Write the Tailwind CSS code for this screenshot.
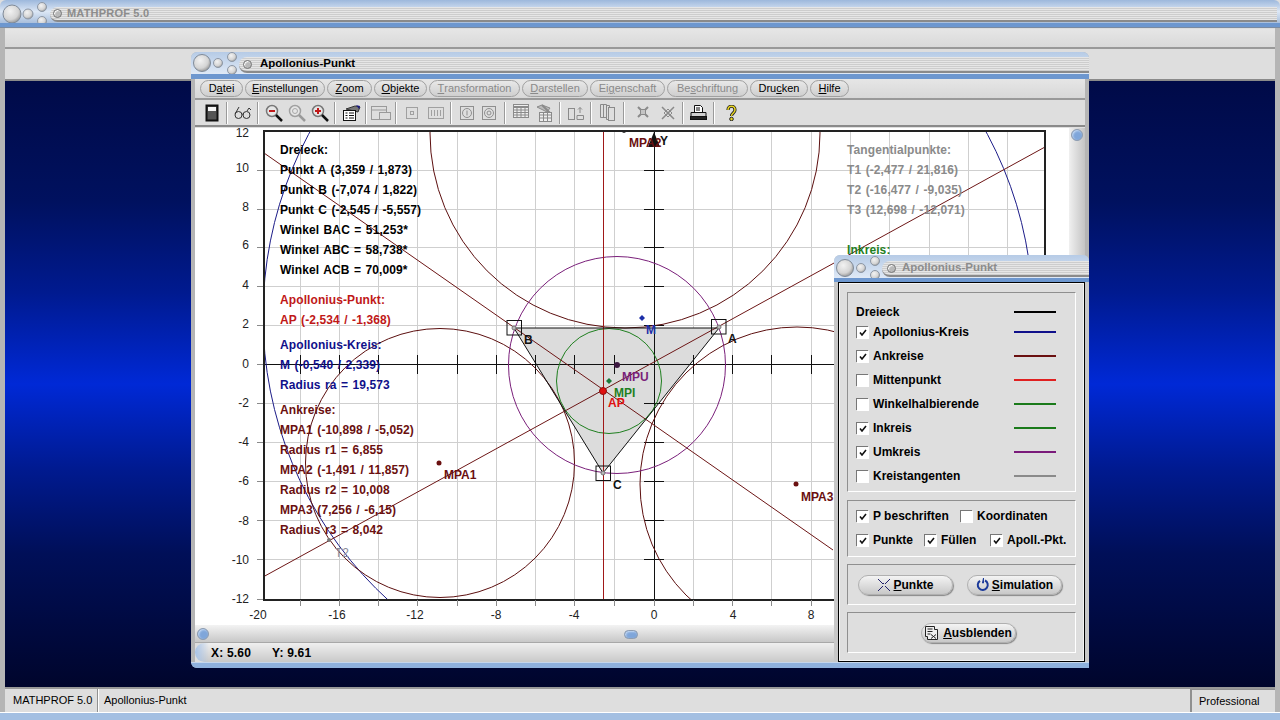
<!DOCTYPE html>
<html lang="de">

<head>
  <meta charset="UTF-8" />
  <title>MATHPROF 5.0</title>
  <script src="https://cdn.jsdelivr.net/npm/@tailwindcss/browser@4"></script>
</head>

<body class="relative w-[1280px] h-[720px] overflow-hidden bg-[#dedede] font-['Liberation_Sans',Arial,sans-serif] text-[11px] text-black">

  <!-- shared gradients for the title bar knobs -->
  <svg class="absolute w-0 h-0">
    <defs>
      <radialGradient id="knob" cx="40%" cy="35%" r="70%">
        <stop offset="0" stop-color="#f2f2f2" />
        <stop offset="0.65" stop-color="#d4d4d4" />
        <stop offset="1" stop-color="#8f8f8f" />
      </radialGradient>
    </defs>
  </svg>

  <!-- Main window -->
  <div class="flex flex-col w-full h-full">
    <div class="flex items-center h-[23px] pt-[5px] pr-[3px] bg-gradient-to-b from-[#9db8dc] via-[#dce7f5] to-[#a9bfdc] rounded-t-md">
      <svg class="shrink-0 w-[52px] h-[28px] -mr-[2px]" viewBox="0 0 52 28">
        <circle cx="12" cy="14" r="9" fill="url(#knob)" stroke="#7f8a98" />
        <circle cx="28" cy="14" r="5" fill="url(#knob)" stroke="#8c97a6" />
        <circle cx="42" cy="7" r="4.5" fill="url(#knob)" stroke="#8c97a6" />
        <circle cx="42" cy="21" r="4.5" fill="url(#knob)" stroke="#8c97a6" />
      </svg>
      <div class="flex items-center flex-1 h-[15px] pl-[3px] rounded-l-full border-b-2 border-[#8a8a8a] bg-[repeating-linear-gradient(to_bottom,#e6e6e6_0px,#e6e6e6_1px,#cdcdcd_1px,#cdcdcd_2px)]">
        <span class="w-[9px] h-[9px] rounded-full bg-[#b9b9b9] border border-[#777] shadow-[inset_1px_1px_1px_#fff]"></span>
        <span class="ml-[5px] font-bold text-[#8c8c8c] tracking-[0.2px]">MATHPROF 5.0</span>
      </div>
    </div>
    <div class="h-[5px] bg-[#6d97cf] border-b border-[#7c8ba0]"></div>

    <div class="flex flex-col flex-1 border-x-[5px] border-x-[#b5b5b5]">
      <div class="h-[20px] mt-px bg-gradient-to-b from-[#e6e6e6] to-[#d9d9d9] border-b-2 border-[#999]"></div>
      <div class="h-[32px] bg-[#dedede] border-b-2 border-[#8a8a8a]"></div>
      <div class="flex-1 bg-[linear-gradient(to_bottom,#000a48_0%,#00115f_20%,#001a90_35%,#0029d6_50%,#001a90_64%,#000f58_78%,#00052c_100%)]"></div>
      <div class="flex h-[25px] border-t-2 border-[#999] bg-[#dedede]">
        <div class="flex items-center w-[93px] pl-[8px] border-r border-[#909090]">MATHPROF 5.0</div>
        <div class="flex items-center flex-1 pl-[5px] border-l border-white border-r border-r-[#909090]">Apollonius-Punkt</div>
        <div class="flex items-center w-[84px] pl-[7px] border-l border-[#909090] border-t border-t-[#909090]">Professional</div>
      </div>
    </div>
    <div class="h-[8px] border-t border-white bg-[#a3bfe2]"></div>
  </div>

  <!-- Apollonius-Punkt graph window -->
  <div class="absolute left-[191px] top-[52px] flex flex-col w-[898px] h-[616px] rounded-md overflow-hidden bg-[#b5b5b5]">
    <div class="flex items-center h-[22px] pt-[2px] bg-gradient-to-b from-[#b6cbe6] to-[#dfe9f6]">
      <svg class="shrink-0 w-[50px] h-[26px] -mr-[2px]" viewBox="0 0 50 26">
        <circle cx="11" cy="12" r="8.5" fill="url(#knob)" stroke="#7f8a98" />
        <circle cx="27" cy="12" r="4.5" fill="url(#knob)" stroke="#8c97a6" />
        <circle cx="41" cy="6" r="4.5" fill="url(#knob)" stroke="#8c97a6" />
        <circle cx="41" cy="19" r="4.5" fill="url(#knob)" stroke="#8c97a6" />
      </svg>
      <div class="flex items-center flex-1 h-[16px] pl-[4px] mt-[2px] rounded-l-full border-b-2 border-[#8a8a8a] bg-[repeating-linear-gradient(to_bottom,#e6e6e6_0px,#e6e6e6_1px,#cdcdcd_1px,#cdcdcd_2px)]">
        <span class="w-[9px] h-[9px] rounded-full bg-[#b9b9b9] border border-[#777] shadow-[inset_1px_1px_1px_#fff]"></span>
        <span class="ml-[8px] font-bold text-[11.5px] text-black">Apollonius-Punkt</span>
      </div>
    </div>
    <div class="h-[5px] bg-[#6d97cf]"></div>

    <div class="flex flex-col flex-1 ml-[4px] mr-[4px] bg-[#dedede]">
      <!-- Menu -->
      <div class="flex items-center gap-[2px] h-[21px] pl-[5px] bg-gradient-to-b from-[#e6e6e6] to-[#d8d8d8] border-b-2 border-[#999]">
        <span class="flex items-center justify-center w-[43px] h-[17px] rounded-full border border-[#a0a0a0] bg-gradient-to-b from-[#e8e8e8] to-[#cfcfcf]">D<u>a</u>tei</span>
        <span class="flex items-center justify-center w-[80px] h-[17px] rounded-full border border-[#a0a0a0] bg-gradient-to-b from-[#e8e8e8] to-[#cfcfcf]"><u>E</u>instellungen</span>
        <span class="flex items-center justify-center w-[45px] h-[17px] rounded-full border border-[#a0a0a0] bg-gradient-to-b from-[#e8e8e8] to-[#cfcfcf]"><u>Z</u>oom</span>
        <span class="flex items-center justify-center w-[53px] h-[17px] rounded-full border border-[#a0a0a0] bg-gradient-to-b from-[#e8e8e8] to-[#cfcfcf]"><u>O</u>bjekte</span>
        <span class="flex items-center justify-center w-[91px] h-[17px] rounded-full border border-[#a0a0a0] bg-gradient-to-b from-[#e8e8e8] to-[#cfcfcf] text-[#8a8a8a]"><u>T</u>ransformation</span>
        <span class="flex items-center justify-center w-[66px] h-[17px] rounded-full border border-[#a0a0a0] bg-gradient-to-b from-[#e8e8e8] to-[#cfcfcf] text-[#8a8a8a]"><u>D</u>arstellen</span>
        <span class="flex items-center justify-center w-[75px] h-[17px] rounded-full border border-[#a0a0a0] bg-gradient-to-b from-[#e8e8e8] to-[#cfcfcf] text-[#8a8a8a]">Ei<u>g</u>enschaft</span>
        <span class="flex items-center justify-center w-[81px] h-[17px] rounded-full border border-[#a0a0a0] bg-gradient-to-b from-[#e8e8e8] to-[#cfcfcf] text-[#8a8a8a]">Be<u>s</u>chriftung</span>
        <span class="flex items-center justify-center w-[58px] h-[17px] rounded-full border border-[#a0a0a0] bg-gradient-to-b from-[#e8e8e8] to-[#cfcfcf]">Dru<u>c</u>ken</span>
        <span class="flex items-center justify-center w-[39px] h-[17px] rounded-full border border-[#a0a0a0] bg-gradient-to-b from-[#e8e8e8] to-[#cfcfcf]"><u>H</u>ilfe</span>
      </div>

      <!-- Toolbar -->
      <div class="flex items-center h-[27px] pl-[3px] bg-[#dedede] border-b-2 border-[#8a8a8a]">
        <div class="flex justify-center w-[28px]">
          <svg class="w-[14px] h-[18px]" viewBox="0 0 14 18"><rect x="1.5" y="1.5" width="11" height="15" fill="#555" stroke="#111" stroke-width="2" /><rect x="3" y="3" width="8" height="4" fill="#f4f4f4" /></svg>
        </div>
        <span class="w-[2px] h-[22px] border-l border-[#9a9a9a] border-r border-r-white"></span>
        <div class="flex justify-center w-[29px]">
          <svg class="w-[20px] h-[16px]" viewBox="0 0 20 16" fill="none" stroke="#333"><circle cx="5.5" cy="10" r="3.5" /><circle cx="13.5" cy="10" r="3.5" /><path d="M9 9.5c.5-.5 1-.5 1.500 0M2 9 6 2M14 6l2-3 2 2" /></svg>
        </div>
        <span class="w-[2px] h-[22px] border-l border-[#9a9a9a] border-r border-r-white"></span>
        <div class="flex justify-center w-[75px]">
          <span class="flex justify-center w-[23px]"><svg class="w-[18px] h-[18px]" viewBox="0 0 18 18" fill="none"><circle cx="7" cy="7" r="5.500" fill="#e6e6e6" stroke="#777" stroke-width="1.500" /><path d="M4 7h6" stroke="#c01818" stroke-width="2" /><path d="m11 11 6 6" stroke="#111" stroke-width="2.500" /></svg></span>
          <span class="flex justify-center w-[23px]"><svg class="w-[18px] h-[18px]" viewBox="0 0 18 18" fill="none"><circle cx="7" cy="7" r="5.500" fill="#e6e6e6" stroke="#a0a0a0" stroke-width="1.500" /><circle cx="7" cy="7" r="2.500" stroke="#a8a8a8" /><path d="m11 11 6 6" stroke="#9a9a9a" stroke-width="2.500" /></svg></span>
          <span class="flex justify-center w-[23px]"><svg class="w-[18px] h-[18px]" viewBox="0 0 18 18" fill="none"><circle cx="7" cy="7" r="5.500" fill="#e6e6e6" stroke="#777" stroke-width="1.500" /><path d="M4 7h6M7 4v6" stroke="#c01818" stroke-width="2" /><path d="m11 11 6 6" stroke="#111" stroke-width="2.500" /></svg></span>
        </div>
        <span class="w-[2px] h-[22px] border-l border-[#9a9a9a] border-r border-r-white"></span>
        <div class="flex justify-center w-[29px]">
          <svg class="w-[20px] h-[18px]" viewBox="0 0 20 18" fill="none"><path d="m5 5 9-3 5 1-2 5z" fill="#777" stroke="#333" /><path d="m15 1 4 1-1 3z" fill="#1a1a80" /><rect x="2.500" y="6.500" width="12" height="10" fill="#fff" stroke="#111" /><path d="M4.500 9h2M8 9h5M4.500 11.500h2M8 11.500h5M4.500 14h2M8 14h5" stroke="#111" /></svg>
        </div>
        <span class="w-[2px] h-[22px] border-l border-[#9a9a9a] border-r border-r-white"></span>
        <div class="flex justify-center w-[28px]">
          <svg class="w-[22px] h-[16px]" viewBox="0 0 22 16" fill="none" stroke="#9a9a9a"><rect x="1.500" y="1.500" width="15" height="13" /><path d="M1.500 5h15" /><rect x="9.500" y="7.500" width="11" height="7" fill="#dedede" /></svg>
        </div>
        <span class="w-[2px] h-[22px] border-l border-[#9a9a9a] border-r border-r-white"></span>
        <div class="flex justify-center w-[53px]">
          <span class="flex justify-center w-[24px]"><svg class="w-[12px] h-[12px]" viewBox="0 0 12 12" fill="none" stroke="#a0a0a0"><rect x="0.500" y="0.500" width="11" height="11" /><rect x="4.500" y="4.500" width="3" height="3" /></svg></span>
          <span class="flex justify-center w-[24px]"><svg class="w-[16px] h-[12px]" viewBox="0 0 16 12" fill="none" stroke="#a0a0a0"><rect x="0.500" y="0.500" width="15" height="11" /><path d="M3.500 3v6M6.500 3v6M9.500 3v6M12.500 3v6" /></svg></span>
        </div>
        <span class="w-[2px] h-[22px] border-l border-[#9a9a9a] border-r border-r-white"></span>
        <div class="flex justify-center w-[52px]">
          <span class="flex justify-center w-[22px]"><svg class="w-[14px] h-[14px]" viewBox="0 0 14 14" fill="none" stroke="#8f8f8f"><rect x="0.500" y="0.500" width="13" height="13" /><circle cx="7" cy="7" r="4.500" /><path d="M7 4.500v5" /></svg></span>
          <span class="flex justify-center w-[22px]"><svg class="w-[14px] h-[14px]" viewBox="0 0 14 14" fill="none" stroke="#8f8f8f"><rect x="0.500" y="0.500" width="13" height="13" /><circle cx="7" cy="7" r="4.500" /><circle cx="7" cy="7" r="2" /></svg></span>
        </div>
        <span class="w-[2px] h-[22px] border-l border-[#9a9a9a] border-r border-r-white"></span>
        <div class="flex justify-center w-[53px]">
          <span class="flex justify-center w-[23px]"><svg class="w-[16px] h-[14px]" viewBox="0 0 16 14" fill="none" stroke="#8a8a8a"><rect x="0.500" y="0.500" width="15" height="13" fill="#eee" /><path d="M0.500 3h15" stroke-width="2" /><path d="M0.500 6h15M0.500 8.500h15M0.500 11h15M4 3v10M8 3v10M12 3v10" /></svg></span>
          <span class="flex justify-center w-[23px]"><svg class="w-[17px] h-[18px]" viewBox="0 0 17 18" fill="none" stroke="#8a8a8a"><path d="m1 3 5-2 8 3-3 4z" fill="#bbb" /><path d="m6 1 8 8" stroke-width="2" /><rect x="3.500" y="8.500" width="12" height="9" fill="#eee" /><path d="M3.500 11h12M3.500 14h12M7.500 8.500v9M11.500 8.500v9" /></svg></span>
        </div>
        <span class="w-[2px] h-[22px] border-l border-[#9a9a9a] border-r border-r-white"></span>
        <div class="flex justify-center w-[29px]">
          <svg class="w-[16px] h-[14px]" viewBox="0 0 16 14" fill="none" stroke="#8a8a8a"><rect x="0.500" y="2.500" width="6" height="11" /><path d="M9 9.500h6.500v4H9zM12 7V1.500M10 3.500l2-2 2 2" /></svg>
        </div>
        <span class="w-[2px] h-[22px] border-l border-[#9a9a9a] border-r border-r-white"></span>
        <div class="flex justify-center w-[31px]">
          <svg class="w-[15px] h-[17px]" viewBox="0 0 15 17" fill="none" stroke="#8a8a8a"><path d="M0.500 0.500h6v13h-6zM3.500 0.500v13M6.500 1.500h3v14h-3z" /><rect x="8.500" y="3.500" width="6" height="13" fill="#dedede" /></svg>
        </div>
        <span class="w-[2px] h-[22px] border-l border-[#9a9a9a] border-r border-r-white"></span>
        <div class="flex justify-center w-[57px] pl-[4px]">
          <span class="flex justify-center w-[25px]"><svg class="w-[12px] h-[12px]" viewBox="0 0 12 12" fill="none" stroke="#8a8a8a" stroke-width="2"><path d="m1 1 3 3M11 1 8 4M1 11l3-3M11 11 8 8" /><rect x="3.500" y="3.500" width="5" height="5" fill="#c4c4c4" stroke-width="1" /></svg></span>
          <span class="flex justify-center w-[25px]"><svg class="w-[14px] h-[14px]" viewBox="0 0 14 14" fill="none" stroke="#8a8a8a" stroke-width="1.500"><path d="m1 1 12 12M13 1 1 13" /><path d="m7 3 4 4-4 4-4-4z" stroke-width="1" /></svg></span>
        </div>
        <span class="w-[2px] h-[22px] border-l border-[#9a9a9a] border-r border-r-white"></span>
        <div class="flex justify-center w-[29px]">
          <svg class="w-[17px] h-[16px]" viewBox="0 0 17 16" fill="none" stroke="#111"><path d="M4.500 7V0.500h6l2 2V7" fill="#fff" /><path d="M6 3h4M6 5h4" /><path d="M1 7.500h15v4H1z" fill="#cfcfcf" /><rect x="0.500" y="11.500" width="16" height="3" fill="#222" /></svg>
        </div>
        <span class="w-[2px] h-[22px] border-l border-[#9a9a9a] border-r border-r-white"></span>
        <div class="flex justify-center w-[32px]">
          <svg class="w-[11px] h-[16px]" viewBox="0 0 11 16" fill="none"><path d="M2 5c0-5 7-5 7 0 0 3-3.500 3-3.500 6" stroke="#222" stroke-width="3.200" /><path d="M2 5c0-5 7-5 7 0 0 3-3.500 3-3.500 6" stroke="#e8d420" stroke-width="1.500" /><circle cx="5.500" cy="14" r="1.800" fill="#e8d420" stroke="#222" /></svg>
        </div>
      </div>

      <!-- Drawing area with scrollbar -->
      <div class="flex h-[497px] mt-[1px]">
        <div class="relative flex-1 bg-white">
          <svg class="absolute left-0 top-0 w-[874px] h-[497px] overflow-visible" viewBox="195 128 874 497" fill="none">
            <defs><clipPath id="frame"><rect x="263" y="130" width="782" height="470" /></clipPath></defs>
            <g clip-path="url(#frame)">
              <!-- grid -->
              <path stroke="#cfcfcf" d="M300.500 130V600M339.500 130V600M378.500 130V600M417.500 130V600M457.500 130V600M496.500 130V600M535.500 130V600M574.500 130V600M614.500 130V600M693.500 130V600M732.500 130V600M771.500 130V600M811.500 130V600M850.500 130V600M889.500 130V600M929.500 130V600M968.500 130V600M1007.500 130V600M263 170.500H1045M263 209.500H1045M263 247.500H1045M263 286.500H1045M263 325.500H1045M263 403.500H1045M263 442.500H1045M263 481.500H1045M263 520.500H1045M263 559.500H1045" />
              <!-- triangle -->
              <path d="M514 328H719L603 473Z" fill="#dcdcdc" />
              <!-- axes -->
              <path stroke="#111" d="M263 364.500H1045M654.500 130V600" />
              <path stroke="#111" d="M300.500 355V374M339.500 355V374M378.500 355V374M417.500 355V374M457.500 355V374M496.500 355V374M535.500 355V374M574.500 355V374M614.500 355V374M693.500 355V374M732.500 355V374M771.500 355V374M811.500 355V374M644 170.500H664M644 209.500H664M644 247.500H664M644 286.500H664M644 325.500H664M644 403.500H664M644 442.500H664M644 481.500H664M644 520.500H664M644 559.500H664" />
              <!-- circles -->
              <circle cx="648" cy="316" r="385" stroke="#1c1c88" />
              <circle cx="440" cy="463" r="134.500" stroke="#5c0f0f" />
              <circle cx="625" cy="133" r="195" stroke="#5c0f0f" />
              <circle cx="797" cy="484" r="157" stroke="#5c0f0f" />
              <circle cx="617" cy="365" r="108.500" stroke="#7a1f7a" />
              <circle cx="609" cy="381" r="52.500" stroke="#1f7f1f" />
              <!-- bisectors -->
              <path stroke="#a01818" d="M603.500 130V600" />
              <path stroke="#6d1616" d="M264 153 833 550M263 577 1045 147" />
              <path stroke="#111" d="M514 328H719L603 473Z" />
              <!-- vertex markers -->
              <g stroke="#111"><rect x="507" y="320.500" width="14.500" height="14.500" /><rect x="711.500" y="319.500" width="14.500" height="14.500" /><rect x="596" y="466" width="14.500" height="14.500" /></g>
              <g fill="#b8b8b8" stroke="#777"><circle cx="514" cy="328" r="2" /><circle cx="719" cy="327" r="2" /><circle cx="603" cy="473" r="2" /></g>
              <!-- points -->
              <circle cx="603" cy="391" r="3.500" fill="#e01010" stroke="#8a1010" />
              <path d="m609 378 3 3-3 3-3-3z" fill="#1a7a3a" />
              <circle cx="617" cy="365" r="3" fill="#3c1840" />
              <path d="m642 315 3 3-3 3-3-3z" fill="#1c2fa8" />
              <circle cx="439" cy="463" r="2.500" fill="#6a1010" />
              <circle cx="796" cy="484" r="2.500" fill="#6a1010" />
              <circle cx="624" cy="131" r="2" fill="#333" />
              <circle cx="329" cy="540" r="2" fill="#777" />
              <path d="m654 132 6 15h-12z" fill="#111" />
            </g>
            <path stroke="#222" stroke-width="2" d="M264 131H1045V600H264Z" />
            <path stroke="#8a8a8a" d="M257 170.500h6M257 209.500h6M257 247.500h6M257 286.500h6M257 325.500h6M257 364.500h6M257 403.500h6M257 442.500h6M257 481.500h6M257 520.500h6M257 559.500h6M257 599.500h6M300.500 600v6M339.500 600v6M378.500 600v6M417.500 600v6M457.500 600v6M496.500 600v6M535.500 600v6M574.500 600v6M614.500 600v6M654.500 600v6M693.500 600v6M732.500 600v6M771.500 600v6M811.500 600v6" />
            <!-- axis numbers -->
            <g fill="#222" font-size="12" text-anchor="end">
              <text x="249" y="137">12</text><text x="249" y="172">10</text><text x="249" y="211">8</text><text x="249" y="249">6</text><text x="249" y="289">4</text><text x="249" y="328">2</text><text x="249" y="368">0</text><text x="249" y="407">-2</text><text x="249" y="446">-4</text><text x="249" y="485">-6</text><text x="249" y="525">-8</text><text x="249" y="564">-10</text><text x="249" y="603">-12</text>
            </g>
            <g fill="#222" font-size="12" text-anchor="middle">
              <text x="258" y="619">-20</text><text x="337" y="619">-16</text><text x="415" y="619">-12</text><text x="496" y="619">-8</text><text x="574" y="619">-4</text><text x="654" y="619">0</text><text x="733" y="619">4</text><text x="811" y="619">8</text>
            </g>
            <!-- point labels -->
            <g font-size="12" font-weight="700">
              <text x="629" y="147" fill="#6a1010">MPA2</text>
              <text x="660" y="145" fill="#111">Y</text>
              <text x="646" y="334" fill="#1c2fa8">M</text>
              <text x="728" y="343" fill="#111">A</text>
              <text x="524" y="344" fill="#111">B</text>
              <text x="613" y="489" fill="#111">C</text>
              <text x="622" y="381" fill="#7a1f7a">MPU</text>
              <text x="614" y="397" fill="#1f7f1f">MPI</text>
              <text x="608" y="407" fill="#e01010">AP</text>
              <text x="444" y="479" fill="#6a1010">MPA1</text>
              <text x="801" y="501" fill="#6a1010">MPA3</text>
              <text x="335" y="557" fill="#8a8a9a" font-weight="400">T2</text>
            </g>
          </svg>

          <!-- values on the left of the drawing -->
          <div class="absolute left-[85px] top-[12px] text-[12px] leading-[20px] font-bold tracking-[0.1px] [word-spacing:1px]">
            <p>Dreieck:</p>
            <p>Punkt A (3,359 / 1,873)</p>
            <p>Punkt B (-7,074 / 1,822)</p>
            <p>Punkt C (-2,545 / -5,557)</p>
            <p>Winkel BAC = 51,253*</p>
            <p>Winkel ABC = 58,738*</p>
            <p>Winkel ACB = 70,009*</p>
            <p class="mt-[10px] text-[#c01818]">Apollonius-Punkt:</p>
            <p class="text-[#c01818]">AP (-2,534 / -1,368)</p>
            <p class="mt-[5px] text-[#10108a]">Apollonius-Kreis:</p>
            <p class="text-[#10108a]">M (-0,540 / 2,339)</p>
            <p class="text-[#10108a]">Radius ra = 19,573</p>
            <p class="mt-[5px] text-[#6a1010]">Ankreise:</p>
            <p class="text-[#6a1010]">MPA1 (-10,898 / -5,052)</p>
            <p class="text-[#6a1010]">Radius r1 = 6,855</p>
            <p class="text-[#6a1010]">MPA2 (-1,491 / 11,857)</p>
            <p class="text-[#6a1010]">Radius r2 = 10,008</p>
            <p class="text-[#6a1010]">MPA3 (7,256 / -6,15)</p>
            <p class="text-[#6a1010]">Radius r3 = 8,042</p>
          </div>

          <!-- values on the right of the drawing -->
          <div class="absolute left-[652px] top-[12px] text-[12px] leading-[20px] font-bold tracking-[0.1px] [word-spacing:1px]">
            <p class="text-[#8a8a8a]">Tangentialpunkte:</p>
            <p class="text-[#8a8a8a]">T1 (-2,477 / 21,816)</p>
            <p class="text-[#8a8a8a]">T2 (-16,477 / -9,035)</p>
            <p class="text-[#8a8a8a]">T3 (12,698 / -12,071)</p>
            <p class="mt-[20px] text-[#1f7f1f]">Inkreis:</p>
          </div>
        </div>
        <div class="flex justify-center w-[16px] pt-[1px] bg-gradient-to-r from-[#f0f0f0] to-[#c4c4c4]">
          <span class="w-[12px] h-[12px] rounded-full bg-[#7fa6da] border border-[#8f9db0] shadow-[inset_1px_1px_2px_#c7dbf5]"></span>
        </div>
      </div>

      <!-- Horizontal scrollbar -->
      <div class="relative flex items-center h-[18px] pl-[2px] bg-gradient-to-b from-[#f3f3f3] to-[#c8c8c8] border-b border-[#a8a8a8]">
        <span class="w-[12px] h-[12px] rounded-full bg-[#7fa6da] border border-[#8f9db0] shadow-[inset_1px_1px_2px_#c7dbf5]"></span>
        <span class="absolute left-[429px] top-[5px] w-[14px] h-[9px] rounded-full bg-[#7fa6da] border border-[#8f9db0] shadow-[inset_1px_1px_2px_#c7dbf5]"></span>
      </div>

      <!-- Coordinates -->
      <div class="flex items-center flex-1 pl-[16px] gap-[21px] rounded-l-xl bg-[linear-gradient(to_right,#a9c4e8_0px,transparent_14px),linear-gradient(to_bottom,#efefef,#c9c9c9)] text-[12px] font-bold tracking-[0.2px]">
        <span>X: 5.60</span>
        <span>Y: 9.61</span>
      </div>
    </div>
    <div class="h-[6px] bg-[#8fb1de] border-t border-[#c6d6ec]"></div>
  </div>

  <!-- Settings panel -->
  <div class="absolute left-[834px] top-[255px] flex flex-col w-[255px] h-[413px] rounded-t-md overflow-hidden bg-[#c8c8c8] text-[12px] font-bold">
    <div class="flex items-center h-[23px] pt-[5px] bg-gradient-to-b from-[#b6cbe6] to-[#dfe9f6]">
      <svg class="shrink-0 w-[50px] h-[26px] -mr-[2px]" viewBox="0 0 50 26">
        <circle cx="11" cy="12" r="8.500" fill="url(#knob)" stroke="#7f8a98" />
        <circle cx="27" cy="12" r="4.500" fill="url(#knob)" stroke="#8c97a6" />
        <circle cx="41" cy="5" r="4.500" fill="url(#knob)" stroke="#8c97a6" />
        <circle cx="41" cy="19" r="4.500" fill="url(#knob)" stroke="#8c97a6" />
      </svg>
      <div class="flex items-center flex-1 h-[16px] pl-[5px] rounded-l-full border-b-2 border-[#8a8a8a] bg-[repeating-linear-gradient(to_bottom,#e6e6e6_0px,#e6e6e6_1px,#cdcdcd_1px,#cdcdcd_2px)]">
        <span class="w-[9px] h-[9px] rounded-full bg-[#b9b9b9] border border-[#777] shadow-[inset_1px_1px_1px_#fff]"></span>
        <span class="ml-[6px] text-[11.5px] text-[#8c8c8c]">Apollonius-Punkt</span>
      </div>
    </div>
    <div class="h-[4px] bg-[#6d97cf]"></div>

    <div class="flex flex-col flex-1 mx-[4px] px-[8px] pt-[9px] bg-[#dedede] border border-black shadow-[inset_0_0_0_1px_#f4f4f4]">
      <div class="h-[200px] border-t border-l border-[#8f8f8f] border-b border-b-white border-r border-r-white pt-[10px]">
        <div class="flex items-center justify-between h-[17px] pl-[8px] pr-[19px]"><span>Dreieck</span><span class="w-[42px] h-[2px] bg-black"></span></div>
        <div class="flex items-center justify-between h-[24px] pl-[8px] pr-[19px]">
          <span class="flex items-center gap-[5px]"><span class="flex items-center justify-center w-[12px] h-[12px] bg-white border-t border-l border-[#777] shadow-[1px_1px_0_#fff]"><svg class="w-[8px] h-[8px]" viewBox="0 0 8 8" fill="none" stroke="#111" stroke-width="1.600"><path d="m1 3.500 2 2.500 4-5" /></svg></span>Apollonius-Kreis</span>
          <span class="w-[42px] h-[2px] bg-[#10108a]"></span>
        </div>
        <div class="flex items-center justify-between h-[24px] pl-[8px] pr-[19px]">
          <span class="flex items-center gap-[5px]"><span class="flex items-center justify-center w-[12px] h-[12px] bg-white border-t border-l border-[#777] shadow-[1px_1px_0_#fff]"><svg class="w-[8px] h-[8px]" viewBox="0 0 8 8" fill="none" stroke="#111" stroke-width="1.600"><path d="m1 3.500 2 2.500 4-5" /></svg></span>Ankreise</span>
          <span class="w-[42px] h-[2px] bg-[#6a1010]"></span>
        </div>
        <div class="flex items-center justify-between h-[24px] pl-[8px] pr-[19px]">
          <span class="flex items-center gap-[5px]"><span class="w-[12px] h-[12px] bg-white border-t border-l border-[#777] shadow-[1px_1px_0_#fff]"></span>Mittenpunkt</span>
          <span class="w-[42px] h-[2px] bg-[#e02020]"></span>
        </div>
        <div class="flex items-center justify-between h-[24px] pl-[8px] pr-[19px]">
          <span class="flex items-center gap-[5px]"><span class="w-[12px] h-[12px] bg-white border-t border-l border-[#777] shadow-[1px_1px_0_#fff]"></span>Winkelhalbierende</span>
          <span class="w-[42px] h-[2px] bg-[#1a7a1a]"></span>
        </div>
        <div class="flex items-center justify-between h-[24px] pl-[8px] pr-[19px]">
          <span class="flex items-center gap-[5px]"><span class="flex items-center justify-center w-[12px] h-[12px] bg-white border-t border-l border-[#777] shadow-[1px_1px_0_#fff]"><svg class="w-[8px] h-[8px]" viewBox="0 0 8 8" fill="none" stroke="#111" stroke-width="1.600"><path d="m1 3.500 2 2.500 4-5" /></svg></span>Inkreis</span>
          <span class="w-[42px] h-[2px] bg-[#1a7a1a]"></span>
        </div>
        <div class="flex items-center justify-between h-[24px] pl-[8px] pr-[19px]">
          <span class="flex items-center gap-[5px]"><span class="flex items-center justify-center w-[12px] h-[12px] bg-white border-t border-l border-[#777] shadow-[1px_1px_0_#fff]"><svg class="w-[8px] h-[8px]" viewBox="0 0 8 8" fill="none" stroke="#111" stroke-width="1.600"><path d="m1 3.500 2 2.500 4-5" /></svg></span>Umkreis</span>
          <span class="w-[42px] h-[2px] bg-[#7a1a7a]"></span>
        </div>
        <div class="flex items-center justify-between h-[24px] pl-[8px] pr-[19px]">
          <span class="flex items-center gap-[5px]"><span class="w-[12px] h-[12px] bg-white border-t border-l border-[#777] shadow-[1px_1px_0_#fff]"></span>Kreistangenten</span>
          <span class="w-[42px] h-[2px] bg-[#8a8a8a]"></span>
        </div>
      </div>

      <div class="h-[57px] mt-[8px] pt-[3px] pl-[8px] border-t border-l border-[#8f8f8f] border-b border-b-white border-r border-r-white">
        <div class="flex items-center h-[24px]">
          <span class="flex items-center gap-[5px] w-[104px]"><span class="flex items-center justify-center w-[12px] h-[12px] bg-white border-t border-l border-[#777] shadow-[1px_1px_0_#fff]"><svg class="w-[8px] h-[8px]" viewBox="0 0 8 8" fill="none" stroke="#111" stroke-width="1.600"><path d="m1 3.500 2 2.500 4-5" /></svg></span>P beschriften</span>
          <span class="flex items-center gap-[5px]"><span class="w-[12px] h-[12px] bg-white border-t border-l border-[#777] shadow-[1px_1px_0_#fff]"></span>Koordinaten</span>
        </div>
        <div class="flex items-center h-[24px]">
          <span class="flex items-center gap-[5px] w-[68px]"><span class="flex items-center justify-center w-[12px] h-[12px] bg-white border-t border-l border-[#777] shadow-[1px_1px_0_#fff]"><svg class="w-[8px] h-[8px]" viewBox="0 0 8 8" fill="none" stroke="#111" stroke-width="1.600"><path d="m1 3.500 2 2.500 4-5" /></svg></span>Punkte</span>
          <span class="flex items-center gap-[5px] w-[66px]"><span class="flex items-center justify-center w-[12px] h-[12px] bg-white border-t border-l border-[#777] shadow-[1px_1px_0_#fff]"><svg class="w-[8px] h-[8px]" viewBox="0 0 8 8" fill="none" stroke="#111" stroke-width="1.600"><path d="m1 3.500 2 2.500 4-5" /></svg></span>Füllen</span>
          <span class="flex items-center gap-[5px]"><span class="flex items-center justify-center w-[12px] h-[12px] bg-white border-t border-l border-[#777] shadow-[1px_1px_0_#fff]"><svg class="w-[8px] h-[8px]" viewBox="0 0 8 8" fill="none" stroke="#111" stroke-width="1.600"><path d="m1 3.500 2 2.500 4-5" /></svg></span>Apoll.-Pkt.</span>
        </div>
      </div>

      <div class="flex items-center justify-center gap-[14px] h-[41px] mt-[7px] pr-[3px] border-t border-l border-[#8f8f8f] border-b border-b-white border-r border-r-white">
        <span class="flex items-center justify-center gap-[2px] w-[95px] h-[20px] rounded-full border border-[#b0b0b0] bg-gradient-to-b from-[#f4f4f4] to-[#c8c8c8] shadow-[1px_1px_1px_#888]">
          <svg class="w-[14px] h-[14px]" viewBox="0 0 14 14" fill="none" stroke="#22226a"><path d="m1 1 5 5 1-1M13 1 8 6M1 13l5-5M13 13 8 8" /></svg>
          <span><u>P</u>unkte</span>
        </span>
        <span class="flex items-center justify-center gap-[2px] w-[95px] h-[20px] rounded-full border border-[#b0b0b0] bg-gradient-to-b from-[#f4f4f4] to-[#c8c8c8] shadow-[1px_1px_1px_#888]">
          <svg class="w-[14px] h-[14px]" viewBox="0 0 14 14" fill="none" stroke="#1c3a9a" stroke-width="2"><path d="M9 2.500a5 5 0 1 1-5 .3" /><path d="M7.500 0v5h-1z" fill="#1c3a9a" stroke-width="1" /></svg>
          <span><u>S</u>imulation</span>
        </span>
      </div>

      <div class="flex items-center justify-center h-[41px] mt-[7px] pl-[13px] border-t border-l border-[#8f8f8f] border-b border-b-white border-r border-r-white">
        <span class="flex items-center justify-center gap-[3px] w-[95px] h-[20px] rounded-full border border-[#b0b0b0] bg-gradient-to-b from-[#f4f4f4] to-[#c8c8c8] shadow-[1px_1px_1px_#888]">
          <svg class="w-[16px] h-[16px]" viewBox="0 0 16 16" fill="none" stroke="#222"><path d="M1.500 1.500h9v3h3v10h-10v-3h-2z" fill="#eee" /><path d="M3.500 4h5M3.500 6.500h5M3.500 9h3M7 9.500l5 4M12 9.500l-5 4" /></svg>
          <span><u>A</u>usblenden</span>
        </span>
      </div>
    </div>
    <div class="h-[6px] bg-[#8fb1de] border-t border-[#c6d6ec]"></div>
  </div>

</body>

</html>
